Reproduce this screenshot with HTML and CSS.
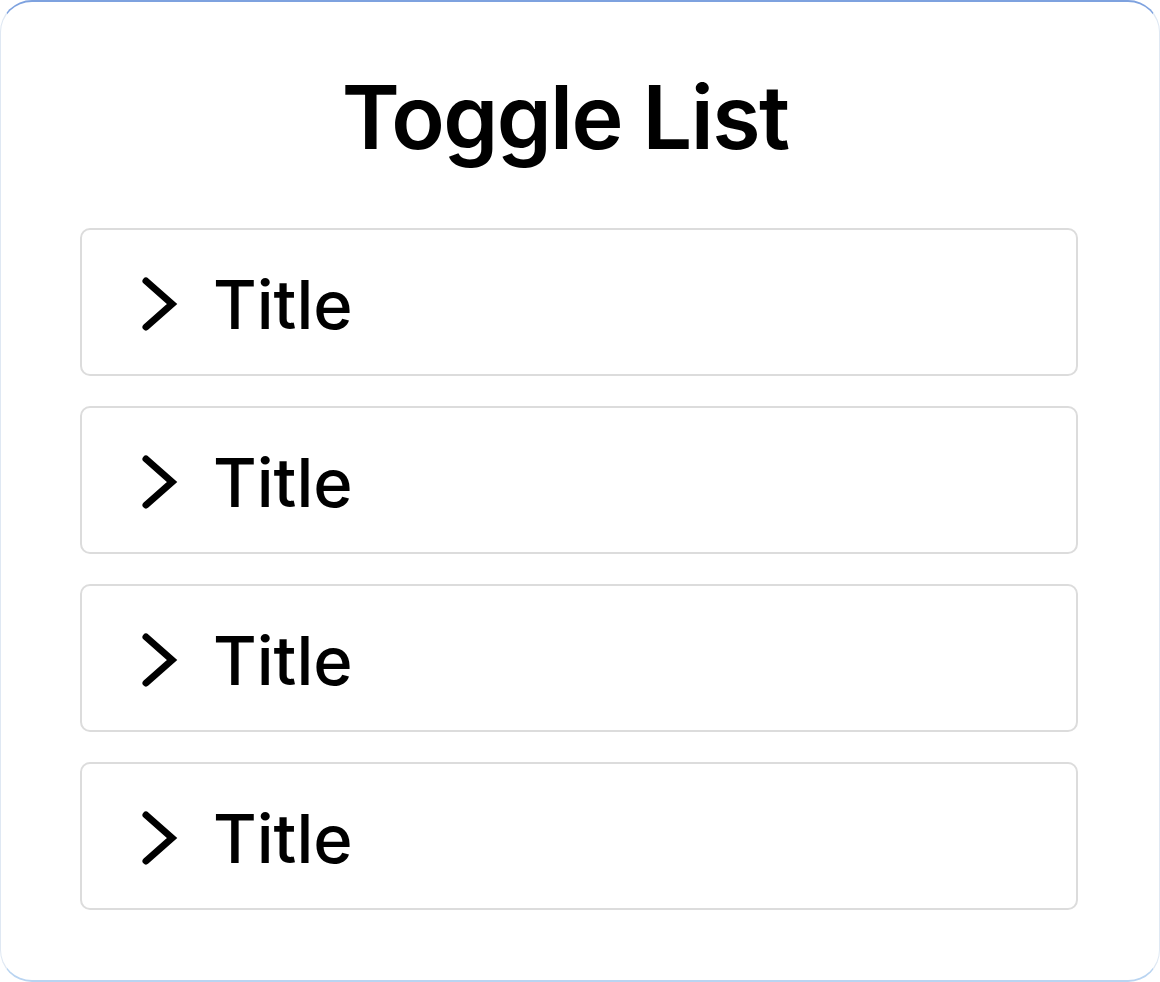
FILE: index.html
```html
<!DOCTYPE html>
<html lang="en">
<head>
<meta charset="utf-8">
<title>Toggle List</title>
<link rel="stylesheet" href="styles.css">
</head>
<body>
<div class="card">
  <h1 class="heading">Toggle List</h1>
  <ul class="list">
    <li class="item">
      <svg class="chevron" viewBox="0 0 38 56" width="38" height="56"><polyline points="6,5 32,28 6,51" fill="none" stroke="#000" stroke-width="7" stroke-linecap="round" stroke-linejoin="miter"/></svg>
      <span class="label">Title</span>
    </li>
    <li class="item">
      <svg class="chevron" viewBox="0 0 38 56" width="38" height="56"><polyline points="6,5 32,28 6,51" fill="none" stroke="#000" stroke-width="7" stroke-linecap="round" stroke-linejoin="miter"/></svg>
      <span class="label">Title</span>
    </li>
    <li class="item">
      <svg class="chevron" viewBox="0 0 38 56" width="38" height="56"><polyline points="6,5 32,28 6,51" fill="none" stroke="#000" stroke-width="7" stroke-linecap="round" stroke-linejoin="miter"/></svg>
      <span class="label">Title</span>
    </li>
    <li class="item">
      <svg class="chevron" viewBox="0 0 38 56" width="38" height="56"><polyline points="6,5 32,28 6,51" fill="none" stroke="#000" stroke-width="7" stroke-linecap="round" stroke-linejoin="miter"/></svg>
      <span class="label">Title</span>
    </li>
  </ul>
</div>
</body>
</html>
```

FILE: styles.css
```css
html, body {
  margin: 0;
  padding: 0;
  background: #ffffff;
}
body {
  font-family: Inter, "Liberation Sans", sans-serif;
  color: #000;
}
.card {
  box-sizing: border-box;
  width: 1160px;
  height: 982px;
  border: 1px solid #dfe8f3;
  border-top: 2px solid #7ea2df;
  border-bottom: 2px solid #b9d4f1;
  border-radius: 32px;
  background: #fff;
  padding: 55px 81px 0 79px;
}
.heading {
  margin: 0;
  padding-right: 28px;
  text-align: center;
  font-size: 88px;
  font-weight: 600;
  line-height: 120px;
  letter-spacing: -1.6px;
}
.list {
  list-style: none;
  margin: 51px 0 0 0;
  padding: 0;
  display: flex;
  flex-direction: column;
  gap: 30px;
}
.item {
  box-sizing: border-box;
  height: 148px;
  border: 2px solid #dcdcdc;
  border-radius: 10px;
  display: flex;
  align-items: center;
  padding-left: 58px;
  padding-top: 4px;
  gap: 35px;
}
.chevron {
  display: block;
  flex: none;
}
.label {
  font-size: 67px;
  font-weight: 500;
  line-height: 1;
}
```
